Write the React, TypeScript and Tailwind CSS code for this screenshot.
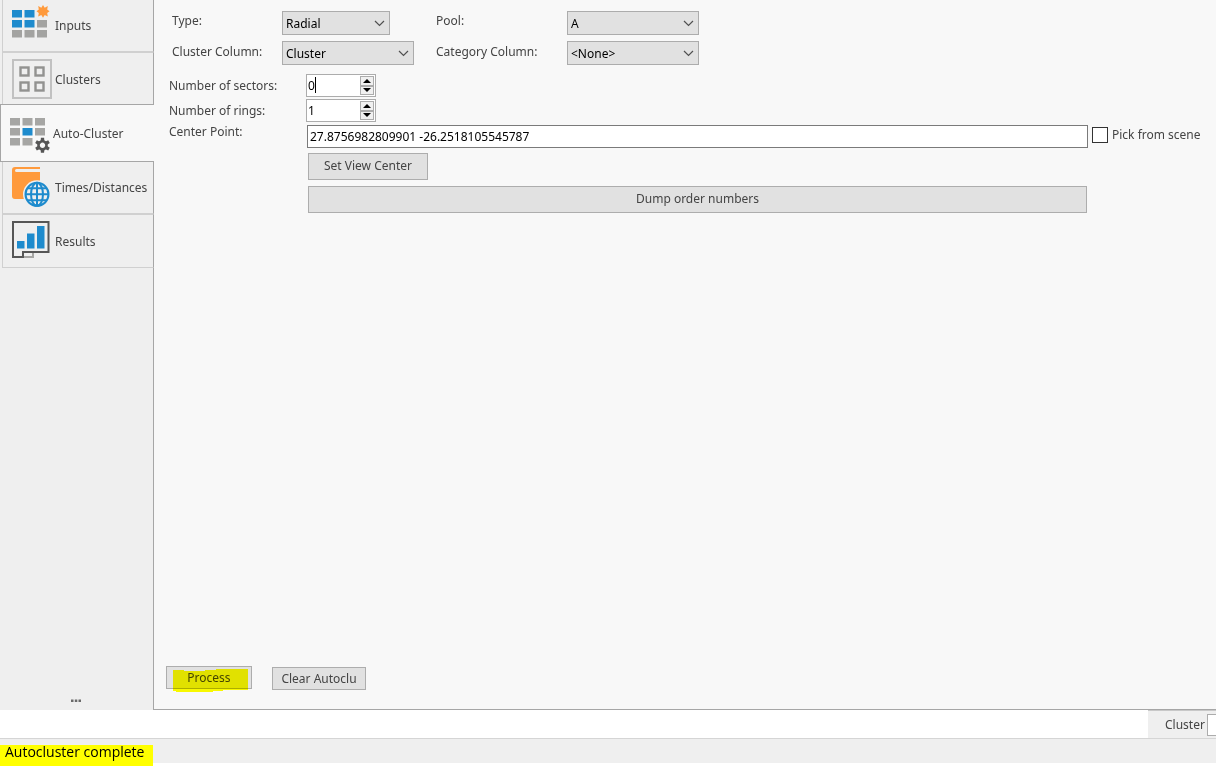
import React, { useState } from 'react';

type Tab = {
  id: string;
  label: string;
  icon: React.ReactNode;
};

function InputsIcon() {
  return (
    <svg width="40" height="40" viewBox="0 0 40 40" className="shrink-0">
      <path fill="#1e8bcd" d="M0 5h10v7.500H0zM12.500 5h10v7.500h-10zM0 15h10v7.500H0zM12.500 15h10v7.500h-10z" />
      <path fill="#a3a3a1" d="M25 15h10v7.500H25zM0 25h10v7.500H0zM12.500 25h10v7.500h-10zM25 25h10v7.500H25z" />
      <path fill="#ff9a3c" d="M31 0l1.700 2.700L35.800 1l-.6 3.400 2.300 1.900-2.300 1.800.6 3.500-3.100-1.500L31 12.700l-1.700-2.600-3.100 1.500.6-3.500-2.300-1.800 2.300-1.900L26.200 1l3.100 1.700z" />
    </svg>
  );
}

function ClustersIcon() {
  return (
    <svg width="40" height="40" viewBox="0 0 40 40" className="shrink-0" fill="none">
      <rect x="1" y="1" width="38" height="38" stroke="#c1c1c1" strokeWidth="2" />
      <g stroke="#929290" strokeWidth="2.400">
        <rect x="8.500" y="8.500" width="8" height="8" />
        <rect x="23.500" y="8.500" width="8" height="8" />
        <rect x="8.500" y="23.500" width="8" height="8" />
        <rect x="23.500" y="23.500" width="8" height="8" />
      </g>
    </svg>
  );
}

function AutoClusterIcon() {
  return (
    <svg width="40" height="40" viewBox="0 0 40 40" className="shrink-0">
      <path fill="#a6a6a4" d="M0 5h10v7.500H0zM12.500 5h10v7.500h-10zM25 5h10v7.500H25zM0 15h10v7.500H0zM25 15h10v7.500H25zM0 25h10v7.500H0zM12.500 25h10v7.500h-10z" />
      <path fill="#1e8bcd" d="M12.500 15h10v7.500h-10z" />
      <g transform="translate(32.500 32.300)">
        <g fill="#565656">
          <path d="M-1.600-7.500h3.200L2.200 0l-.6 7.500h-3.200L-2.200 0z" />
          <path d="M-1.600-7.500h3.200L2.200 0l-.6 7.500h-3.200L-2.200 0z" transform="rotate(60)" />
          <path d="M-1.600-7.500h3.200L2.200 0l-.6 7.500h-3.200L-2.200 0z" transform="rotate(120)" />
        </g>
        <circle r="4" fill="#f8f8f8" stroke="#565656" strokeWidth="2.600" />
      </g>
    </svg>
  );
}

function TimesIcon() {
  return (
    <svg width="40" height="40" viewBox="0 0 40 40" className="shrink-0">
      <path fill="#ff9a3c" d="M3 0h25v2H4.500a1.500 1.500 0 0 0 0 3H28v27H3a3 3 0 0 1-3-3V3a3 3 0 0 1 3-3z" />
      <circle cx="25" cy="27.300" r="14" fill="#efefef" />
      <g fill="none" stroke="#1e8bcd" strokeWidth="2">
        <circle cx="25" cy="27.300" r="11.500" />
        <ellipse cx="25" cy="27.300" rx="6" ry="11.500" />
        <path d="M25 16v23M13.500 27.300h23M15.500 21.300h19M15.500 33.300h19" />
      </g>
    </svg>
  );
}

function ResultsIcon() {
  return (
    <svg width="40" height="40" viewBox="0 0 40 40" className="shrink-0">
      <path d="M12 36h9v-4" fill="none" stroke="#a6a6a4" strokeWidth="2" />
      <path d="M1 1h35.500v30H11v5H1z" fill="none" stroke="#565656" strokeWidth="2" />
      <path fill="#1e8bcd" d="M5 20h7.500v7.500H5zM15 12.500h7.500v15H15zM25 5h7.500v22.500H25z" />
    </svg>
  );
}

const tabs: Tab[] = [
  { id: 'inputs', label: 'Inputs', icon: <InputsIcon /> },
  { id: 'clusters', label: 'Clusters', icon: <ClustersIcon /> },
  { id: 'auto', label: 'Auto-Cluster', icon: <AutoClusterIcon /> },
  { id: 'times', label: 'Times/Distances', icon: <TimesIcon /> },
  { id: 'results', label: 'Results', icon: <ResultsIcon /> },
];

const tabStyles: Record<string, string> = {
  inputs: 'h-[52px] border-b border-b-[#d0d0d0] ml-0.5 border-l border-l-[#d0d0d0] border-r border-r-[#a6a6a6] pb-px',
  clusters: 'h-[52px] border-t border-t-[#d0d0d0] ml-0.5 border-l border-l-[#d0d0d0] border-r border-r-[#a6a6a6] pt-px',
  auto: 'h-[58px] border-y border-l border-[#a6a6a6] bg-[#f8f8f8]',
  times: 'h-[52px] border-b border-b-[#d0d0d0] ml-0.5 border-l border-l-[#d0d0d0] border-r border-r-[#a6a6a6] pb-px',
  results: 'h-[54px] border-y border-y-[#d0d0d0] ml-0.5 border-l border-l-[#d0d0d0] border-r border-r-[#a6a6a6]',
};

function SelectBox({ id, value, options, className }: { id: string, value: string, options: string[], className: string }) {
  return (
    <div className={`relative ${className}`}>
      <select id={id} defaultValue={value} className="h-6 w-full appearance-none border border-[#acacac] bg-[#e1e1e1] pl-[3px] pt-0.5 text-black">
        {options.map((o) => <option key={o}>{o}</option>)}
      </select>
      <svg width="11" height="7" viewBox="0 0 11 7" className="pointer-events-none absolute right-[5px] top-[9px]">
        <path d="M1 1l4.500 4.500L10 1" fill="none" stroke="#505050" strokeWidth="1.200" />
      </svg>
    </div>
  );
}

function Spinner({ id, initial, focused }: { id: string, initial: number, focused?: boolean }) {
  const [value, setValue] = useState(initial);

  return (
    <div className="relative flex h-[23px] w-[70px] border border-[#acacac] bg-white">
      <input
        id={id}
        type="text"
        value={value}
        onChange={(e) => setValue(Number(e.target.value) || 0)}
        className="min-w-0 flex-1 bg-transparent pl-px text-black outline-none"
      />
      {focused && <span className="absolute left-2 top-0.5 h-4 w-px bg-black" />}
      <div className="flex w-[15px] flex-col py-px pr-px">
        <button type="button" aria-label="Increase" onClick={() => setValue(value + 1)} className="flex flex-1 items-center justify-center border border-[#acacac] bg-[#f0f0f0]">
          <svg width="8" height="4" viewBox="0 0 8 4"><path d="M4 0l4 4H0z" /></svg>
        </button>
        <button type="button" aria-label="Decrease" onClick={() => setValue(value - 1)} className="flex flex-1 items-center justify-center border border-[#acacac] bg-[#f0f0f0]">
          <svg width="8" height="4" viewBox="0 0 8 4"><path d="M0 0h8L4 4z" /></svg>
        </button>
      </div>
    </div>
  );
}

export default function App() {
  const [active, setActive] = useState('auto');

  return (
    <div className="flex min-h-screen flex-col bg-white font-['Noto_Sans',sans-serif] text-[12px] text-[#444]">
      <div className="flex flex-1">
        <nav className="flex w-[154px] shrink-0 flex-col bg-[#efefef]">
          {tabs.map((tab) => (
            <button
              key={tab.id}
              type="button"
              aria-pressed={active === tab.id}
              onClick={() => setActive(tab.id)}
              className={`flex shrink-0 items-center gap-[3px] whitespace-nowrap pl-[9px] text-left ${tabStyles[tab.id]}`}
            >
              {tab.icon}
              <span className="pt-0.5">{tab.label}</span>
            </button>
          ))}
          <div className="flex flex-1 items-end justify-center border-r border-[#a6a6a6] pb-2 pr-0.5">
            <svg width="10" height="3" viewBox="0 0 10 3" fill="#6a6a6a">
              <path d="M0 .5h2.500v2.500H0zM3.800.5h2.500v2.500H3.800zM7.500.5H10v2.500H7.500z" />
            </svg>
          </div>
        </nav>

        <main className="flex min-w-0 flex-1 flex-col border-b border-[#a6a6a6] bg-[#f8f8f8] pt-[11px]">
          <div className="grid grid-cols-[110px_154px_131px_132px] gap-y-1.5 pl-[18px] leading-5">
            <label htmlFor="type">Type:</label>
            <SelectBox id="type" value="Radial" options={['Radial', 'Grid']} className="w-[108px]" />
            <label htmlFor="pool">Pool:</label>
            <SelectBox id="pool" value="A" options={['A', 'B']} className="w-[132px]" />
            <label htmlFor="clusterColumn" className="pt-px">Cluster Column:</label>
            <SelectBox id="clusterColumn" value="Cluster" options={['Cluster']} className="w-[132px]" />
            <label htmlFor="categoryColumn" className="pt-px">Category Column:</label>
            <SelectBox id="categoryColumn" value="<None>" options={['<None>']} className="w-[132px]" />
          </div>

          <div className="mt-[9px] grid grid-cols-[137px_70px] items-center gap-y-0.5 pl-[15px]">
            <label htmlFor="sectors">Number of sectors:</label>
            <Spinner id="sectors" initial={0} focused />
            <label htmlFor="rings">Number of rings:</label>
            <Spinner id="rings" initial={1} />
          </div>

          <div className="mt-[3px] grid grid-cols-[138px_1fr_128px] gap-y-[5px] pl-[15px]">
            <label htmlFor="center" className="leading-[14px]">Center Point:</label>
            <input id="center" type="text" defaultValue="27.8756982809901 -26.2518105545787" className="h-[23px] min-w-0 border border-[#7a7a7a] bg-white pl-0.5 text-black" />
            <label className="flex h-5 items-center gap-1 whitespace-nowrap pl-1">
              <input type="checkbox" className="size-4 shrink-0 appearance-none border border-[#333] bg-white checked:bg-[#333]" />
              Pick from scene
            </label>
            <div className="col-start-2 flex flex-col items-start gap-1.5 px-px">
              <button type="button" className="h-[27px] w-[120px] border border-[#adadad] bg-[#e1e1e1] pb-0.5">Set View Center</button>
              <button type="button" className="h-[27px] w-full border border-[#adadad] bg-[#e1e1e1] pb-0.5">Dump order numbers</button>
            </div>
          </div>

          <div className="mt-auto flex items-start gap-5 pb-[19px] pl-3 pt-4">
            <div className="relative">
              <button type="button" className="h-[23px] w-[86px] border border-[#adadad] bg-[#e1e1e1]">Process</button>
              <svg width="75" height="23" viewBox="0 0 75 23" className="pointer-events-none absolute left-[7px] top-[3px] mix-blend-multiply">
                <path fill="#ff0" d="M0 1h11v1h21V1h11V0h32v21H50v1H40v1H3v-1H0z" />
              </svg>
            </div>
            <button type="button" className="mt-px h-[23px] w-[94px] border border-[#adadad] bg-[#e1e1e1]">Clear Autoclu</button>
          </div>
        </main>
      </div>

      <div className="flex h-7 justify-end">
        <div className="flex w-[68px] items-center gap-0.5 overflow-hidden border-t border-[#c8c8c8] bg-[#efefef] pl-[17px]">
          <label htmlFor="clusterValue" className="w-10 shrink-0">Cluster</label>
          <input id="clusterValue" type="text" className="h-[22px] w-20 shrink-0 border border-[#acacac] bg-white" />
        </div>
      </div>

      <footer className="mb-1 flex h-[25px] items-start border-t border-[#d5d5d5] bg-[#efefef] pt-1.5">
        <div className="h-[21px] w-[153px] shrink-0 whitespace-nowrap bg-[#ff0] pl-[5px] font-['Open_Sans',sans-serif] text-[14px] leading-[14px] text-black">
          Autocluster complete
        </div>
      </footer>
    </div>
  );
}
